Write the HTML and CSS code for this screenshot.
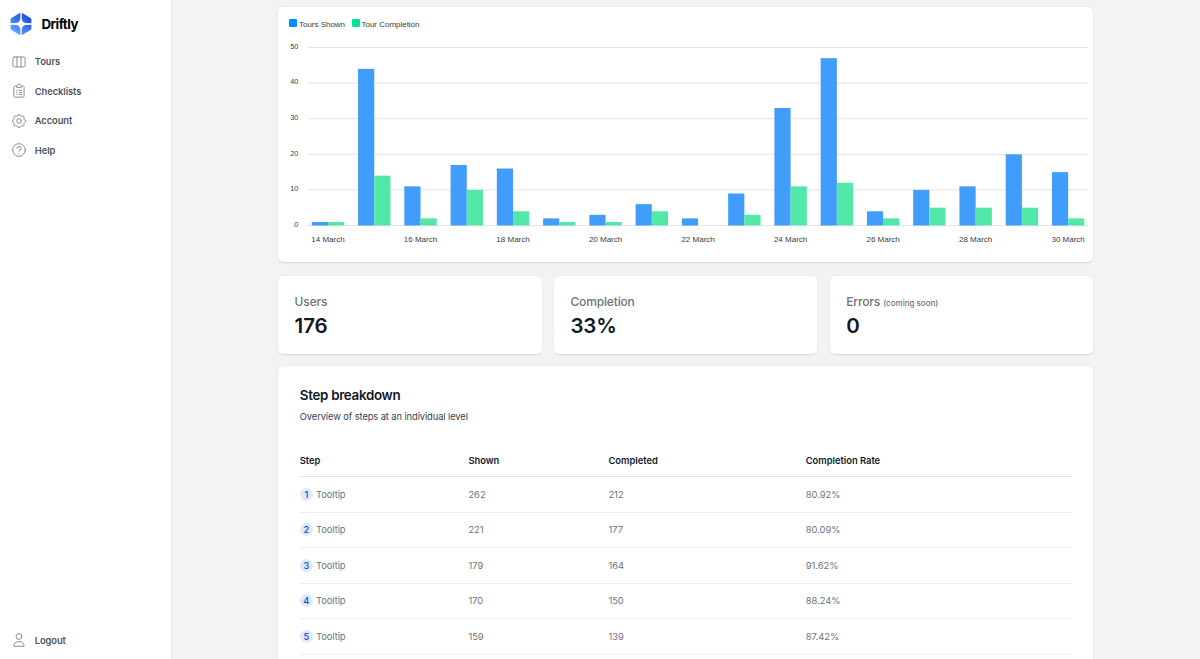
FILE: index.html
```html
<!DOCTYPE html>
<html lang="en">
<head>
<meta charset="utf-8">
<title>Driftly</title>
<link rel="stylesheet" href="styles.css">
</head>
<body>
<div class="app">
  <aside class="sidebar">
    <div class="brand">
      <svg class="logo" viewBox="0 0 22 24">
        <defs>
          <linearGradient id="brand-fill" gradientUnits="userSpaceOnUse" x1="17" y1="4" x2="4" y2="21">
            <stop offset="0" stop-color="#2450d3"/><stop offset=".5" stop-color="#3f78ee"/><stop offset="1" stop-color="#69a8fb"/>
          </linearGradient>
        </defs>
        <g fill="url(#brand-fill)">
          <path d="M10.300 1v5.400Q9.900 10.400 6.200 10.900L.6 11.300V7.400Q.6 6.400 1.500 5.900L9 1.500Z"/>
          <path d="M11.700 1v5.400Q12.100 10.400 15.800 10.900L21.400 11.300V7.400Q21.400 6.400 20.500 5.900L13 1.500Z"/>
          <path d="M10.300 23v-5.400Q9.900 13.600 6.200 13.100L.6 12.700V16.600Q.6 17.600 1.500 18.100L9 22.500Z"/>
          <path d="M11.700 23v-5.400Q12.100 13.600 15.800 13.100L21.400 12.700V16.600Q21.400 17.600 20.500 18.100L13 22.500Z"/>
        </g>
      </svg>
      <span>Driftly</span>
    </div>
    <nav class="nav">
      <a class="nav-item"><svg class="icon" viewBox="0 0 16 16"><rect x="1.900" y="3" width="12.200" height="9.900" rx="1.400"/><path d="M6 3v9.900M10 3v9.900"/></svg>Tours</a>
      <a class="nav-item"><svg class="icon" viewBox="0 0 16 16"><path d="M5.700 3H4.300Q2.900 3 2.900 4.400v8.400q0 1.400 1.400 1.400h7.400q1.400 0 1.400-1.400V4.400Q13.100 3 11.700 3h-1.400"/><path d="M5.700 4V2.900q0-.8.800-.8.300-1 1.500-1t1.500 1q.8 0 .8.800V4ZM8 7.200h2.600M8 9.300h2.600M8 11.400h2.600M5.500 7.200h.4M5.500 9.300h.4M5.500 11.400h.4"/></svg>Checklists</a>
      <a class="nav-item"><svg class="icon" viewBox="0 0 16 16"><circle cx="8" cy="8" r="2.300"/><path d="M6.500 2.700Q6.800 1.400 8 1.400T9.500 2.700Q10.100 3.600 11.100 3.100Q12.200 2.700 12.800 3.400T12.900 5Q12.400 6 13.300 6.500Q14.600 6.900 14.600 8T13.300 9.500Q12.400 10 12.900 11Q13.400 12 12.700 12.600T11.100 12.900Q10.100 12.400 9.500 13.300Q9.200 14.600 8 14.600T6.500 13.300Q5.900 12.400 4.900 12.900Q3.800 13.300 3.200 12.600T3.100 11Q3.600 10 2.700 9.500Q1.400 9.100 1.400 8T2.700 6.500Q3.600 6 3.100 5Q2.600 4 3.300 3.400T4.900 3.100Q5.900 3.600 6.500 2.700Z"/></svg>Account</a>
      <a class="nav-item"><svg class="icon" viewBox="0 0 16 16"><circle cx="8" cy="8" r="6.300"/><path d="M5.700 6.200Q6 4.500 8 4.500T10.300 6.300Q10.300 7.300 9 7.900Q8 8.300 8 9.300M8 11.200v.3"/></svg>Help</a>
    </nav>
    <a class="nav-item logout"><svg class="icon" viewBox="0 0 16 16"><circle cx="8" cy="4.500" r="2.900"/><path d="M2.900 13.900Q3.100 9.600 8 9.600t5.100 4.300Z"/></svg>Logout</a>
  </aside>
  <main class="main">
    <section class="card chart-card">
      <div class="legend">
        <span class="legend-item"><i class="swatch shown"></i>Tours Shown</span>
        <span class="legend-item"><i class="swatch done"></i>Tour Completion</span>
      </div>
      <svg class="chart" id="chart" viewBox="278 30 815 232"></svg>
    </section>
    <section class="stats">
      <div class="card stat"><div class="stat-label">Users</div><div class="stat-value">176</div></div>
      <div class="card stat"><div class="stat-label">Completion</div><div class="stat-value">33%</div></div>
      <div class="card stat"><div class="stat-label">Errors <small>(coming soon)</small></div><div class="stat-value">0</div></div>
    </section>
    <section class="card breakdown">
      <h1>Step breakdown</h1>
      <p>Overview of steps at an individual level</p>
      <div class="table">
        <div class="row head"><span>Step</span><span>Shown</span><span>Completed</span><span>Completion Rate</span></div>
        <div class="row"><span class="step"><b>1</b>Tooltip</span><span>262</span><span>212</span><span>80.92%</span></div>
        <div class="row"><span class="step"><b>2</b>Tooltip</span><span>221</span><span>177</span><span>80.09%</span></div>
        <div class="row"><span class="step"><b>3</b>Tooltip</span><span>179</span><span>164</span><span>91.62%</span></div>
        <div class="row"><span class="step"><b>4</b>Tooltip</span><span>170</span><span>150</span><span>88.24%</span></div>
        <div class="row"><span class="step"><b>5</b>Tooltip</span><span>159</span><span>139</span><span>87.42%</span></div>
      </div>
    </section>
  </main>
</div>
<script src="chart.js"></script>
</body>
</html>
```

FILE: styles.css
```css
* { box-sizing: border-box; }
body { margin: 0; font-family: Inter, "Liberation Sans", sans-serif; font-size: 9.35px; background: #f2f3f5; color: #111827; }
.app { display: flex; height: 659px; overflow: hidden; }
.sidebar { width: 171.500px; flex: none; background: #fff; border-right: 1px solid #e5e7eb; display: flex; flex-direction: column; padding: 12px 0 4px 10px; }
.brand { display: flex; align-items: center; gap: 9.500px; height: 24px; font-size: 13.350px; font-weight: 700; letter-spacing: -.550px; color: #000; }
.logo { width: 22px; height: 24px; }
.nav { margin-top: 11px; }
.nav-item { display: flex; align-items: center; gap: 8px; height: 29.500px; padding-left: .800px; font-weight: 600; letter-spacing: -.080px; color: #4b5563; }
.icon { width: 16px; height: 16px; fill: none; stroke: #868e9c; stroke-width: 1; stroke-linecap: round; stroke-linejoin: round; }
.logout { margin-top: auto; }
.main { flex: 1; padding: 7px 107px 0 106.800px; }
.card { background: #fff; border-radius: 5px; box-shadow: 0 .700px 2px rgba(0,0,0,.08), 0 .700px 1.300px rgba(0,0,0,.05); }
.chart-card { height: 255.400px; overflow: hidden; }
.legend { display: flex; gap: 6.500px; height: 23px; padding: 12px 0 0 10.700px; font: 8px/11px "Liberation Sans", Arial, sans-serif; letter-spacing: -.020px; color: #373d3f; }
.legend-item { display: flex; gap: 2px; }
.swatch { width: 8px; height: 8px; border-radius: 1.300px; }
.swatch.shown { background: #008ffb; }
.swatch.done { background: #00e396; }
.chart { display: block; width: 815px; height: 232px; font-family: "Liberation Sans", Arial, sans-serif; }
.chart text { fill: #373d3f; }
.grid { stroke: #e4e4e4; stroke-width: 1; }
.bar-shown { fill: #409dfb; }
.bar-done { fill: #52e8a8; }
.stats { display: grid; grid-template-columns: repeat(3, 1fr); gap: 12.500px; margin-top: 13.200px; }
.stat { height: 78px; padding: 18px 16.300px; }
.stat-label { font-size: 12px; line-height: 16px; height: 16px; font-weight: 500; letter-spacing: -.150px; color: #6b7280; }
.stat-label small { font-size: 8px; letter-spacing: 0; }
.stat-value { font-size: 20.500px; line-height: 24px; margin-top: 4.500px; font-weight: 600; letter-spacing: -.100px; }
.breakdown { margin-top: 12.800px; height: 320px; padding: 20px 21.500px; }
h1 { margin: 0; font-size: 13.350px; line-height: 18px; font-weight: 600; letter-spacing: -.300px; }
p { margin: 5.700px 0 0; line-height: 14px; letter-spacing: -.100px; color: #374151; }
.table { margin-top: 21.100px; }
.row { display: grid; grid-template-columns: 168.600px 140px 197.300px 1fr; align-items: center; height: 35.500px; border-bottom: 1px solid #eceef1; color: #6b7280; }
.head { height: 32px; border-color: #dfe1e5; font-weight: 600; color: #111827; }
.step { display: flex; align-items: center; gap: 3.300px; letter-spacing: -.080px; }
.step b { width: 13px; height: 13px; border-radius: 50%; background: #dbeafe; color: #1e4bb8; font-weight: 500; line-height: 13px; text-align: center; }
```

FILE: chart.js
```js
const shown = [1, 44, 11, 17, 16, 2, 3, 6, 2, 9, 33, 47, 4, 10, 11, 20, 15];
const done = [1, 14, 2, 10, 4, 1, 1, 4, 0, 3, 11, 12, 2, 5, 5, 5, 2];
const base = 225.5, unit = 3.56, first = 328, pitch = 46.26, bar = 16.2;
let out = '';
for (let v = 0; v <= 50; v += 10) {
  const y = base - v * unit;
  out += `<line class="grid" x1="307.500" x2="1089" y1="${y}" y2="${y}"/>`;
  out += `<text x="298.400" y="${y + 1.3}" font-size="7.350" text-anchor="end">${v}</text>`;
}
shown.forEach((value, i) => {
  const x = first + i * pitch;
  out += `<rect class="bar-shown" x="${x - bar}" y="${base - value * unit}" width="${bar}" height="${value * unit}"/>`;
  out += `<rect class="bar-done" x="${x}" y="${base - done[i] * unit}" width="${bar}" height="${done[i] * unit}"/>`;
  if (i % 2 === 0) {
    out += `<line class="grid" x1="${x}" x2="${x}" y1="226" y2="229.500" stroke-opacity=".6"/>`;
    out += `<text x="${x}" y="242.200" font-size="8" text-anchor="middle">${14 + i} March</text>`;
  }
});
document.getElementById('chart').innerHTML = out;
```
